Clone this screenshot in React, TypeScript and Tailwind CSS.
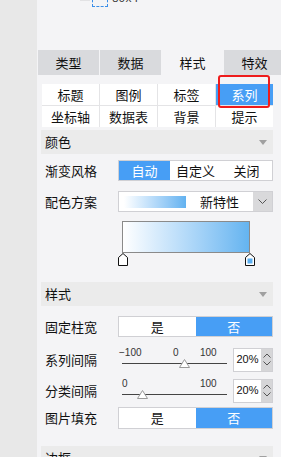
import React from 'react';

const font = { fontFamily: '"Noto Sans CJK SC", "Liberation Sans", sans-serif' };

const SectionHeader: React.FC<{ title: string }> = ({ title }) => (
  <div className="flex h-[24px] items-center justify-between bg-[#ebebeb] pl-[4px] pr-[6px] text-[13px] text-[#111]">
    <span>{title}</span>
    <svg width="8" height="5" viewBox="0 0 8 5">
      <polygon points="0,0 8,0 4,5" fill="#a0a0a0" />
    </svg>
  </div>
);

const Label: React.FC<{ children: React.ReactNode }> = ({ children }) => (
  <div className="w-[77px] shrink-0 pl-[4px] text-[13px] text-[#111]">{children}</div>
);

const Segmented: React.FC<{ items: string[]; active: number }> = ({ items, active }) => (
  <div className="flex h-full flex-1 border border-[#d0d0d4] bg-white">
    {items.map((t, i) => (
      <div
        key={t}
        className={
          i === active
            ? 'flex flex-1 items-center justify-center bg-[#479ef5] text-[13px] text-white'
            : 'flex flex-1 items-center justify-center text-[13px] text-[#111]'
        }
      >
        {t}
      </div>
    ))}
  </div>
);

const Triangle: React.FC = () => (
  <svg width="11" height="9" viewBox="0 0 11 9">
    <polygon points="5.5,0.5 10.5,8.5 0.5,8.5" fill="#fff" stroke="#9a9a9a" strokeWidth="1" />
  </svg>
);

const Spinner: React.FC = () => (
  <div className="ml-auto flex h-[24px] w-[40px] border border-[#d0d0d4]">
    <div className="flex w-[27px] items-center justify-center bg-white font-['Liberation_Sans'] text-[11px] text-[#111]">
      20%
    </div>
    <div className="flex flex-1 flex-col items-center justify-center gap-[3px] bg-[#d6d6d8]">
      <svg width="8" height="5" viewBox="0 0 8 5">
        <polyline points="0.5,4.5 4,1 7.5,4.5" fill="none" stroke="#555" strokeWidth="1" />
      </svg>
      <svg width="8" height="5" viewBox="0 0 8 5">
        <polyline points="0.5,0.5 4,4 7.5,0.5" fill="none" stroke="#555" strokeWidth="1" />
      </svg>
    </div>
  </div>
);

const Slider: React.FC<{ labels: { t: string; x: number }[]; thumb: number }> = ({ labels, thumb }) => (
  <div className="relative h-[25px] w-[110px]">
    {labels.map((l) => (
      <span
        key={l.t}
        className="absolute top-[1px] font-['Liberation_Sans'] text-[10px] leading-[10px] text-[#333]"
        style={{ left: l.x }}
      >
        {l.t}
      </span>
    ))}
    <div className="absolute left-[4px] top-[16px] h-px w-[105px] bg-[#444]" />
    <div className="absolute top-[12px]" style={{ left: thumb }}>
      <Triangle />
    </div>
  </div>
);

const Handle: React.FC<{ filled?: boolean }> = ({ filled }) => (
  <svg width="10" height="13" viewBox="0 0 10 13">
    <polygon points="5,0.5 9.5,4.5 9.5,12.5 0.5,12.5 0.5,4.5" fill="#fff" stroke="#111" strokeWidth="1" />
    {filled && <rect x="2.5" y="5.5" width="5" height="5" fill="#5aaef0" />}
  </svg>
);

export default function App() {
  return (
    <div className="flex h-[457px] w-[281px] overflow-hidden bg-[#f4f4f6]" style={font}>
      <div className="w-[37px] shrink-0 bg-[#e8e8e8]" />
      <div className="flex min-w-0 flex-1 flex-col">
        {/* top canvas remainder */}
        <div className="h-[50px] shrink-0">
          <div className="flex items-start">
            <div className="ml-[43px] h-px w-[10px] bg-[#e2e2e4]" />
            <div className="ml-[2px] -mt-[10px] h-[17px] w-[16px] border border-dashed border-[#3b8ee8]" />
            <span className="-mt-[6px] ml-[4px] font-['Liberation_Mono'] text-[11px] leading-[11px] text-[#333]">80x4</span>
          </div>
        </div>

        {/* main tabs */}
        <div className="flex h-[25px] shrink-0 gap-px pl-px">
          {['类型', '数据', '样式', '特效'].map((t, i) => (
            <div
              key={t}
              className={
                i === 2
                  ? 'flex w-[61px] shrink-0 items-center justify-center bg-[#f4f4f6] text-[13px] text-[#111]'
                  : 'flex w-[61px] shrink-0 items-center justify-center bg-[#d9dadd] text-[13px] text-[#111]'
              }
            >
              {t}
            </div>
          ))}
        </div>

        <div className="flex flex-col pl-[4px] pr-[8px]">
          {/* sub tabs */}
          <div className="relative mt-[9px] ml-px grid grid-cols-4 gap-px bg-[#e4e4e6]">
            {['标题', '图例', '标签', '系列', '坐标轴', '数据表', '背景', '提示'].map((t, i) => (
              <div
                key={t}
                className={
                  i === 3
                    ? 'flex h-[21px] items-center justify-center bg-[#479ef5] text-[13px] text-white'
                    : 'flex h-[21px] items-center justify-center bg-white text-[13px] text-[#111]'
                }
              >
                {t}
              </div>
            ))}
            <div className="absolute left-[176px] top-[-9px] h-[33px] w-[52px] rounded-[3px] border-2 border-[#ee1c1c]" />
          </div>

          <div className="mt-[3px]">
            <SectionHeader title="颜色" />
          </div>

          <div className="mt-[6px] flex h-[21px] items-center">
            <Label>渐变风格</Label>
            <Segmented items={['自动', '自定义', '关闭']} active={0} />
          </div>

          <div className="mt-[10px] flex h-[21px] items-center">
            <Label>配色方案</Label>
            <div className="flex h-full flex-1 items-center border border-[#d0d0d4] bg-white">
              <div className="ml-[5px] h-[12px] w-[62px] bg-gradient-to-r from-white to-[#62b2f0]" />
              <div className="flex-1 text-center text-[13px] text-[#111]">新特性</div>
              <div className="flex h-full w-[19px] items-center justify-center bg-[#d9d9db]">
                <svg width="9" height="5" viewBox="0 0 9 5">
                  <polyline points="0.5,0.5 4.5,4.5 8.5,0.5" fill="none" stroke="#555" strokeWidth="1" />
                </svg>
              </div>
            </div>
          </div>

          <div className="ml-[81px] mt-[9px] h-[32px] w-[128px] border border-[#8a8a8a] bg-gradient-to-r from-white to-[#64b4f0]" />
          <div className="ml-[77px] flex w-[137px] justify-between">
            <Handle />
            <Handle filled />
          </div>

          <div className="mt-[16px]">
            <SectionHeader title="样式" />
          </div>

          <div className="mt-[10px] flex h-[21px] items-center">
            <Label>固定柱宽</Label>
            <Segmented items={['是', '否']} active={1} />
          </div>

          <div className="mt-[10px] flex h-[25px] items-center">
            <Label>系列间隔</Label>
            <Slider
              labels={[
                { t: '−100', x: 1 },
                { t: '0', x: 55 },
                { t: '100', x: 82 },
              ]}
              thumb={61}
            />
            <Spinner />
          </div>

          <div className="mt-[6px] flex h-[25px] items-center">
            <Label>分类间隔</Label>
            <Slider
              labels={[
                { t: '0', x: 4 },
                { t: '100', x: 82 },
              ]}
              thumb={19}
            />
            <Spinner />
          </div>

          <div className="mt-[4px] flex h-[22px] items-center">
            <Label>图片填充</Label>
            <Segmented items={['是', '否']} active={1} />
          </div>

          <div className="mt-[17px]">
            <SectionHeader title="边框" />
          </div>
        </div>
      </div>
    </div>
  );
}
